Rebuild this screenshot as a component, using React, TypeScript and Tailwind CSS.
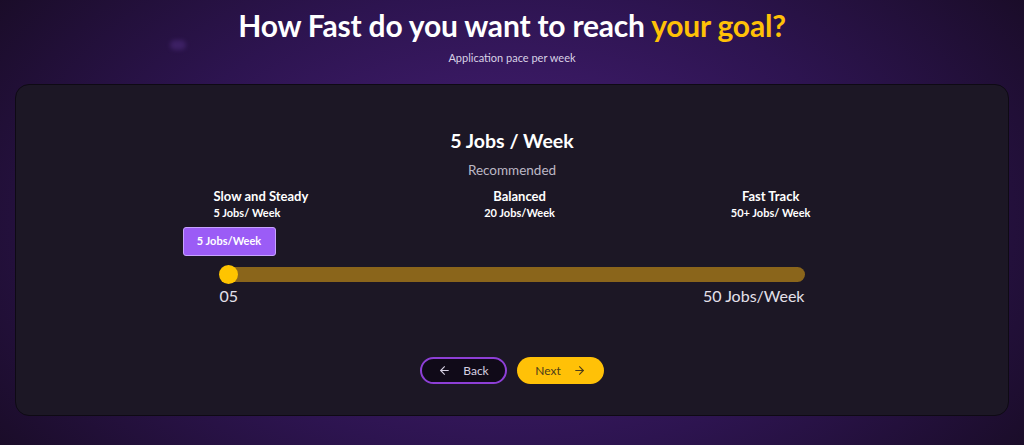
import React from 'react';
import { ArrowLeft, ArrowRight } from 'lucide-react';

export default function App() {
  return (
    <div className="relative w-full h-[445px] overflow-hidden font-['Lato',sans-serif] bg-[radial-gradient(ellipse_65%_95%_at_50%_50%,#4a207c_0%,#2d1450_55%,#170b22_100%)]">
      {/* faint decorative dot */}
      <div className="absolute left-[170px] top-[40px] w-[16px] h-[10px] rounded-full bg-[#4a2a78] opacity-60 blur-[2px]" />

      <div className="flex flex-col items-center pt-[6px]">
        <h1 className="text-[30px] leading-[38px] font-bold text-white tracking-[-0.2px]">
          How Fast do you want to reach <span className="text-[#ffc107]">your goal?</span>
        </h1>
        <p className="mt-[7px] text-[11px] leading-[14px] text-[#d9d2e6]">Application pace per week</p>
      </div>

      <div className="mx-[15px] mt-[19px] h-[332px] rounded-[14px] border border-[#0e0a14] bg-[#1c1725] flex flex-col items-center pt-[43px]">
        <div className="text-[19.5px] leading-[26px] font-bold text-white">5 Jobs / Week</div>
        <div className="mt-[7px] text-[13.5px] leading-[18px] text-[#bdb8c6]">Recommended</div>

        <div className="mt-[9px] w-[597px] flex justify-between text-white font-bold">
          <div className="flex flex-col items-start">
            <span className="text-[13px] leading-[16px]">Slow and Steady</span>
            <span className="mt-[2px] text-[11px] leading-[14px]">5 Jobs/ Week</span>
          </div>
          <div className="flex flex-col items-center">
            <span className="text-[13px] leading-[16px]">Balanced</span>
            <span className="mt-[2px] text-[11px] leading-[14px]">20 Jobs/Week</span>
          </div>
          <div className="flex flex-col items-center">
            <span className="text-[13px] leading-[16px]">Fast Track</span>
            <span className="mt-[2px] text-[11px] leading-[14px]">50+ Jobs/ Week</span>
          </div>
        </div>

        <div className="mt-[47px] w-[585px]">
          <div className="relative h-[15px] rounded-full bg-[#8a651b]">
            <div className="absolute left-[-1px] top-[-2px] w-[19px] h-[19px] rounded-full bg-[#ffc400]" />
            <div className="absolute left-[-37px] top-[-40px] w-[93px] h-[29px] rounded-[3px] border border-[#c7a3ff] bg-[#9b5cf6] flex items-center justify-center text-[11px] font-bold text-white">
              5 Jobs/Week
            </div>
          </div>
          <div className="mt-[4px] flex justify-between text-[16px] leading-[20px] text-[#e4e0ea]">
            <span>05</span>
            <span>50 Jobs/Week</span>
          </div>
        </div>

        <div className="mt-[51px] flex gap-[10px]">
          <button className="w-[87px] h-[27px] rounded-full border-2 border-[#8d3fd6] bg-[#100a18] flex items-center justify-center gap-[12px] text-[12px] text-[#d6d0e2]">
            <ArrowLeft size={13} strokeWidth={2} />
            Back
          </button>
          <button className="w-[87px] h-[27px] rounded-full bg-[#ffc107] flex items-center justify-center gap-[12px] text-[12px] text-[#4d3d1a]">
            Next
            <ArrowRight size={13} strokeWidth={2} />
          </button>
        </div>
      </div>
    </div>
  );
}
